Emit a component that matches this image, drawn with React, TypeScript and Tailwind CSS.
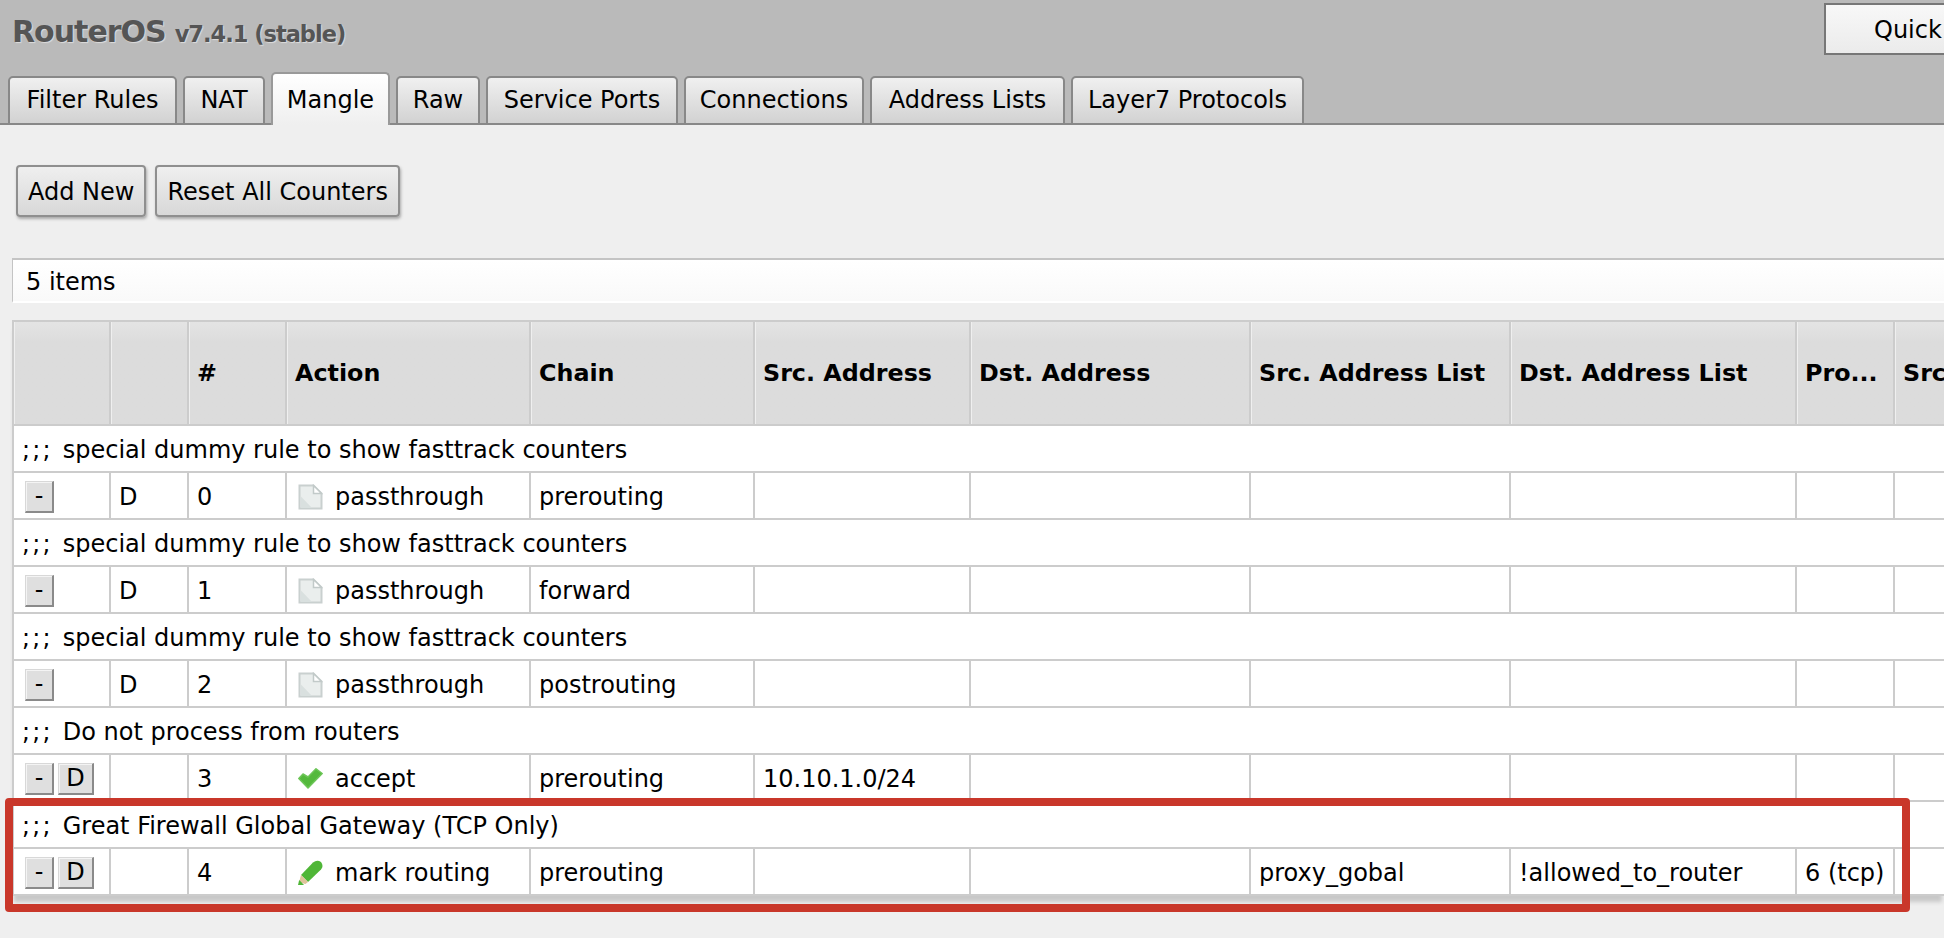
import React from "react";

const tabs = [
  { label: "Filter Rules", width: "w-[169px]" },
  { label: "NAT", width: "w-[82px]" },
  { label: "Mangle", width: "w-[119px]" },
  { label: "Raw", width: "w-[84px]" },
  { label: "Service Ports", width: "w-[192px]" },
  { label: "Connections", width: "w-[180px]" },
  { label: "Address Lists", width: "w-[195px]" },
  { label: "Layer7 Protocols", width: "w-[233px]" },
];

const columns = ["", "", "#", "Action", "Chain", "Src. Address", "Dst. Address", "Src. Address List", "Dst. Address List", "Pro...", "Src"];

type Rule = {
  comment: string;
  flag: string;
  disable: boolean;
  no: string;
  icon: "doc" | "check" | "pencil";
  action: string;
  chain: string;
  src?: string;
  srcList?: string;
  dstList?: string;
  proto?: string;
};

const rules: Rule[] = [
  { comment: "special dummy rule to show fasttrack counters", flag: "D", disable: false, no: "0", icon: "doc", action: "passthrough", chain: "prerouting" },
  { comment: "special dummy rule to show fasttrack counters", flag: "D", disable: false, no: "1", icon: "doc", action: "passthrough", chain: "forward" },
  { comment: "special dummy rule to show fasttrack counters", flag: "D", disable: false, no: "2", icon: "doc", action: "passthrough", chain: "postrouting" },
  { comment: "Do not process from routers", flag: "", disable: true, no: "3", icon: "check", action: "accept", chain: "prerouting", src: "10.10.1.0/24" },
  { comment: "Great Firewall Global Gateway (TCP Only)", flag: "", disable: true, no: "4", icon: "pencil", action: "mark routing", chain: "prerouting", srcList: "proxy_gobal", dstList: "!allowed_to_router", proto: "6 (tcp)" },
];

const ActionIcon = ({ type }: { type: Rule["icon"] }) => {
  if (type === "doc") {
    return (
      <svg width="25" height="26" viewBox="0 0 25 26" className="shrink-0">
        <path d="M1.5 1.5H15.5L23.5 9.5V24.5H1.5Z" fill="#eaeeed" stroke="#c9d0cf" strokeWidth="2" />
        <path d="M2.5 24V12L14 24Z" fill="#d9e0df" />
        <path d="M15.5 1.5V9.5H23.5Z" fill="#fff" stroke="#c2cac9" strokeWidth="1.5" />
      </svg>
    );
  }
  if (type === "check") {
    return (
      <svg width="25" height="21" viewBox="0 0 25 21" className="shrink-0">
        <path d="M0.8 10.5L5 6L10 9L18 0.8L24.2 5.5L10 20Z" fill="#54b93c" stroke="#6cc557" strokeWidth="1.5" strokeLinejoin="round" />
      </svg>
    );
  }
  return (
    <svg width="25" height="25" viewBox="0 0 25 25" className="shrink-0">
      <path d="M3 15L15 2.5Q19 -0.5 23 2Q26 6 23 9.5L10 22Z" fill="#4fb637" />
      <path d="M3 15L10 22L7.5 24L1 22.5Z" fill="#e0c49c" />
      <path d="M1.2 20L6 25H0Z" fill="#4fb637" />
    </svg>
  );
};

const SmallButton = ({ label, className }: { label: string; className: string }) => (
  <div className={`flex items-center justify-center h-[32px] bg-[#dfdfdf] border border-[#d8d8d8] border-r-2 border-b-2 border-r-[#8a8a8a] border-b-[#8a8a8a] shadow-[inset_1px_1px_0_#f4f4f4] ${className}`}>
    {label}
  </div>
);

const Cell = ({ children }: { children?: React.ReactNode }) => (
  <td className="h-[47px] p-0 pl-[8px] pt-[2px] border-r-2 border-b-2 border-[#cccccc] whitespace-nowrap overflow-hidden bg-white">{children}</td>
);

export default function App() {
  return (
    <div className="relative w-[1944px] h-[938px] overflow-hidden bg-[#efefef] text-[24px] text-black font-['DejaVu_Sans',sans-serif]">
      {/* header */}
      <div className="h-[125px] bg-[#bababa] border-b-2 border-[#888888] flex flex-col justify-between">
        <div className="flex items-start">
          <div className="ml-[12px] mt-[12px] flex items-baseline gap-[9px] font-bold text-[#555555] tracking-[-1px] [text-shadow:1px_1px_1px_#dddddd]">
            <span className="text-[30px] leading-[40px]">RouterOS</span>
            <span className="text-[22.5px]">v7.4.1 (stable)</span>
          </div>
          <div className="ml-auto -mr-[80px] mt-[3px] w-[200px] h-[52px] pl-[48px] pt-[2px] flex items-center border-2 border-[#777777] bg-gradient-to-b from-[#f8f8f8] to-[#ebebeb]">
            Quick
          </div>
        </div>
        <div className="flex items-end gap-[6px] pl-[8px] -mb-[2px]">
          {tabs.map((tab) => (
            <div
              key={tab.label}
              className={
                tab.label === "Mangle"
                  ? `${tab.width} h-[53px] pt-[6px] text-center rounded-t-[5px] border-2 border-b-0 border-[#999999] bg-gradient-to-b from-[#ffffff] to-[#efefef] leading-[40px]`
                  : `${tab.width} h-[49px] pt-[2px] text-center rounded-t-[5px] border-2 border-[#888888] bg-gradient-to-b from-[#f0f0f0] to-[#d2d2d2] leading-[40px]`
              }
            >
              {tab.label}
            </div>
          ))}
        </div>
      </div>

      {/* action buttons */}
      <div className="flex gap-[9px] ml-[16px] mt-[40px]">
        <div className="h-[52px] px-[10px] pt-[1px] flex items-center rounded-[4px] border-2 border-[#8f8f8f] bg-gradient-to-b from-[#efefef] to-[#d8d8d8] shadow-[1px_2px_3px_#aaaaaa]">Add New</div>
        <div className="h-[52px] px-[10px] pt-[1px] flex items-center rounded-[4px] border-2 border-[#8f8f8f] bg-gradient-to-b from-[#efefef] to-[#d8d8d8] shadow-[1px_2px_3px_#aaaaaa]">Reset All Counters</div>
      </div>

      {/* item count */}
      <div className="ml-[12px] mt-[41px] h-[45px] pl-[13px] pt-[2px] flex items-center border-t-2 border-l border-[#c4c4c4] border-b-2 border-b-white bg-gradient-to-b from-white to-[#f9f9f9]">
        5 items
      </div>

      {/* rules table */}
      <div className="ml-[12px] mt-[17px] border-t-2 border-l-2 border-[#cccccc] shadow-[0_8px_4px_-2px_#c8c8c8]">
        <table className="table-fixed border-separate border-spacing-0 w-[2081px]">
          <colgroup>
            <col className="w-[97px]" />
            <col className="w-[78px]" />
            <col className="w-[98px]" />
            <col className="w-[244px]" />
            <col className="w-[224px]" />
            <col className="w-[216px]" />
            <col className="w-[280px]" />
            <col className="w-[260px]" />
            <col className="w-[286px]" />
            <col className="w-[98px]" />
            <col className="w-[200px]" />
          </colgroup>
          <thead>
            <tr>
              {columns.map((col, i) => (
                <th key={i} className="h-[104px] p-0 pl-[8px] pt-[1px] text-left text-[23.8px] font-bold border-r-2 border-b-2 border-[#cccccc] bg-gradient-to-b from-[#e4e4e4] via-[#dcdcdc] via-20% to-[#dcdcdc] shadow-[inset_1px_0_0_#efefef] whitespace-nowrap">
                  {col}
                </th>
              ))}
            </tr>
          </thead>
          <tbody>
            {rules.map((rule) => (
              <React.Fragment key={rule.no}>
                <tr>
                  <td colSpan={11} className="h-[47px] p-0 pl-[8px] pt-[2px] border-b-2 border-[#cccccc] bg-white whitespace-nowrap">
                    <span className="tracking-[2.2px]">;;; </span>
                    {rule.comment}
                  </td>
                </tr>
                <tr>
                  <Cell>
                    <div className="flex gap-[4px] ml-[3px]">
                      <SmallButton label="-" className="w-[29px]" />
                      {rule.disable && <SmallButton label="D" className="w-[36px]" />}
                    </div>
                  </Cell>
                  <Cell>{rule.flag}</Cell>
                  <Cell>{rule.no}</Cell>
                  <Cell>
                    <div className="flex items-center gap-[12px] ml-[3px]">
                      <ActionIcon type={rule.icon} />
                      {rule.action}
                    </div>
                  </Cell>
                  <Cell>{rule.chain}</Cell>
                  <Cell>{rule.src}</Cell>
                  <Cell />
                  <Cell>{rule.srcList}</Cell>
                  <Cell>{rule.dstList}</Cell>
                  <Cell>{rule.proto}</Cell>
                  <Cell />
                </tr>
              </React.Fragment>
            ))}
          </tbody>
        </table>
      </div>

      {/* red highlight drawn over the last rule */}
      <div className="absolute left-[5px] top-[798px] w-[1905px] h-[114px] border-8 border-[#c9372a] rounded-[4px]" />
    </div>
  );
}
